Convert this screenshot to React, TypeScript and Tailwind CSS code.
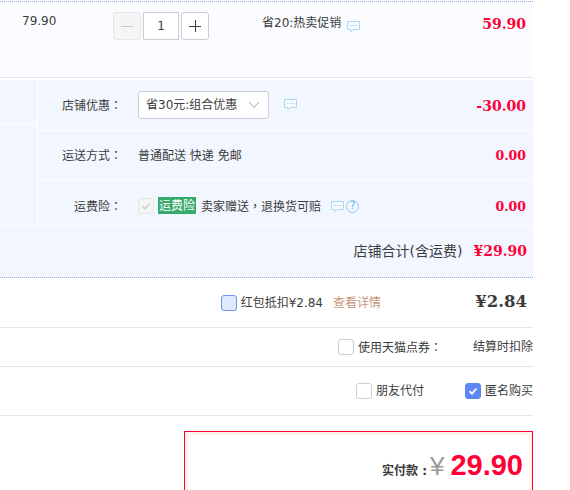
const priceFont = "font-['DejaVu_Serif',serif] font-bold text-[#ff0036]";
const price = `${priceFont} text-[14px]`;

function Bubble({ className = "" }: { className?: string }) {
  return (
    <svg width="13" height="13" viewBox="0 0 13 13" className={className} fill="none">
      <path d="M.5 1.5h12v8H6.5L4 12V9.500H.5z" stroke="#a9d8f5" strokeWidth="1" fill="#f6fbff" />
      <path d="M3 5.500h1.500M5.800 5.500h1.500M8.600 5.500h1.500" stroke="#a9d8f5" strokeWidth="1" />
    </svg>
  );
}

function Check({ tone, checked = false, className = "" }: { tone: string; checked?: boolean; className?: string }) {
  return (
    <span className={`flex h-4 w-4 shrink-0 items-center justify-center rounded-[3px] border ${tone} ${className}`}>
      {checked && (
        <svg width="10" height="10" viewBox="0 0 10 10" fill="none">
          <path d="M1.500 5.200 4 7.700 8.500 2.500" stroke="currentColor" strokeWidth="1.800" />
        </svg>
      )}
    </span>
  );
}

function Mark({ children }: { children: string }) {
  return <span className="font-['Noto_Sans_CJK_TC',sans-serif]">{children}</span>;
}

function ShopRow({ h, label, children, value, extra = "", valueClass }: { h: string; label: string; children: React.ReactNode; value: string; extra?: string; valueClass: string }) {
  return (
    <div className={`flex items-center ${h} ${extra}`}>
      <div className="w-[84px] shrink-0 text-right whitespace-nowrap">{label}<Mark>：</Mark></div>
      <div className="ml-[16px] flex flex-1 items-center whitespace-nowrap">{children}</div>
      <div className={`mr-[7px] ${valueClass}`}>{value}</div>
    </div>
  );
}

export default function App() {
  return (
    <div className="h-[490px] w-[570px] overflow-hidden bg-white text-[12px] leading-none text-[#3c3c3c] font-['DejaVu_Sans','Noto_Sans_CJK_SC',sans-serif]">
      <div className="w-[533px]">
        <div className="mt-[1px] flex h-[76px] border-t border-dotted border-t-[#8fb0dc] bg-[#fbfcff]">
          <div className="ml-[22px] mt-[13px] w-[91px]">79.90</div>
          <div className="mt-[10px] flex h-[28px] gap-[2px]">
            <div className="flex w-[28px] items-center justify-center rounded-[3px] border border-[#e6e6e6] bg-[#f5f5f5] text-[#c8c8c8]">
              <span className="h-px w-3 bg-current" />
            </div>
            <div className="flex w-[36px] items-center justify-center border border-[#ccccd6] bg-white">1</div>
            <div className="relative flex w-[28px] items-center justify-center rounded-[3px] border border-[#ccccd6] bg-white">
              <span className="h-px w-3 bg-current" />
              <span className="absolute h-3 w-px bg-current" />
            </div>
          </div>
          <div className="ml-[53px] mt-[15px] whitespace-nowrap">省20:热卖促销</div>
          <Bubble className="ml-[6px] mt-[18px]" />
          <div className={`${price} ml-auto mr-[7px] mt-[15px]`}>59.90</div>
        </div>
        <div className="h-[3px] border-t border-dotted border-[#cfcfcf]" />

        <div className="h-[198px] border-b border-dotted border-b-[#8fb0dc] bg-[#f2f7ff]">
          <div className="flex h-[146px] border-b border-white">
            <div className="w-[37px] shrink-0">
              <div className="h-[45px] border-b border-white" />
            </div>
            <div className="flex-1 border-l border-white">
              <ShopRow h="h-[51px]" extra="border-b border-white" label="店铺优惠" value="-30.00" valueClass={`${price} mt-[2px]`}>
                <div className="-mt-px flex h-[28px] w-[131px] items-center justify-between rounded-[3px] border border-[#ccccd6] bg-white pl-[7px] pr-[8px]">
                  <span>省30元:组合优惠</span>
                  <svg width="12" height="8" viewBox="0 0 12 8" fill="none"><path d="M1 1l5 5.500L11 1" stroke="#a5a5ad" /></svg>
                </div>
                <Bubble className="ml-[15px] -mt-[2px]" />
              </ShopRow>
              <ShopRow h="h-[50px]" extra="border-b border-white" label="运送方式" value="0.00" valueClass={`${priceFont} text-[12.500px] mt-[1px]`}>
                <span>普通配送 快递 免邮</span>
              </ShopRow>
              <ShopRow h="h-[44px]" extra="pt-[6px]" label="运费险" value="0.00" valueClass={`${priceFont} text-[12.500px] mt-[2px]`}>
                <Check tone="border-[#e5e5e5] bg-[#f5f5f5] text-[#d4d4d4]" checked />
                <span className="mb-[1px] ml-[4px] flex h-[17px] w-[38px] items-center justify-center bg-[#35aa6a] text-white">运费险</span>
                <span className="ml-[5px]">卖家赠送<Mark>，</Mark>退换货可赔</span>
                <Bubble className="ml-[10px]" />
                <span className="ml-[2px] flex h-[13px] w-[13px] items-center justify-center rounded-full border border-[#8cc8f0] text-[10px] text-[#6db6e8]">?</span>
              </ShopRow>
            </div>
          </div>
          <div className="flex h-[50px] items-center justify-end pr-[6px]">
            <span className="text-[14px]">店铺合计(含运费)</span>
            <span className={`${price} ml-[11px]`}>¥29.90</span>
          </div>
        </div>

        <div className="flex h-[50px] items-center justify-end border-b border-dotted border-[#cfcfcf] pr-[6px]">
          <Check tone="border-[#6d94f5] bg-[#dfe9fb]" className="mr-[4px]" />
          <span>红包抵扣¥2.84</span>
          <span className="ml-[10px] text-[#c8967a]">查看详情</span>
          <span className="w-[146px] text-right font-['DejaVu_Serif',serif] text-[16.500px] font-bold">¥2.84</span>
        </div>
        <div className="flex h-[39px] items-center justify-end border-b border-dotted border-[#cfcfcf]">
          <Check tone="border-[#ccccd6] bg-white" className="mr-[4px]" />
          <span>使用天猫点券<Mark>：</Mark></span>
          <span className="ml-[31px]">结算时扣除</span>
        </div>
        <div className="flex h-[49px] items-center justify-end border-b border-dotted border-[#cfcfcf]">
          <Check tone="border-[#ccccd6] bg-white" className="mr-[4px]" />
          <span>朋友代付</span>
          <Check tone="border-[#5d87f5] bg-[#5d87f5] text-white" checked className="ml-[41px] mr-[4px]" />
          <span>匿名购买</span>
        </div>
        <div className="ml-[184px] mt-[15px] h-[70px] border border-[#ff0036]">
          <div className="h-full border-x-[3px] border-t-[3px] border-[#fff0e8] bg-white">
            <div className="flex items-baseline justify-end pr-[6px] pt-[16px]">
              <span className="font-bold">实付款 :</span>
              <span className="ml-[3px] font-['Liberation_Sans',sans-serif] text-[26px] text-[#999]">¥</span>
              <span className="ml-[6px] font-['Liberation_Sans',sans-serif] text-[29px] font-bold text-[#ff0036]">29.90</span>
            </div>
          </div>
        </div>
      </div>
    </div>
  );
}
